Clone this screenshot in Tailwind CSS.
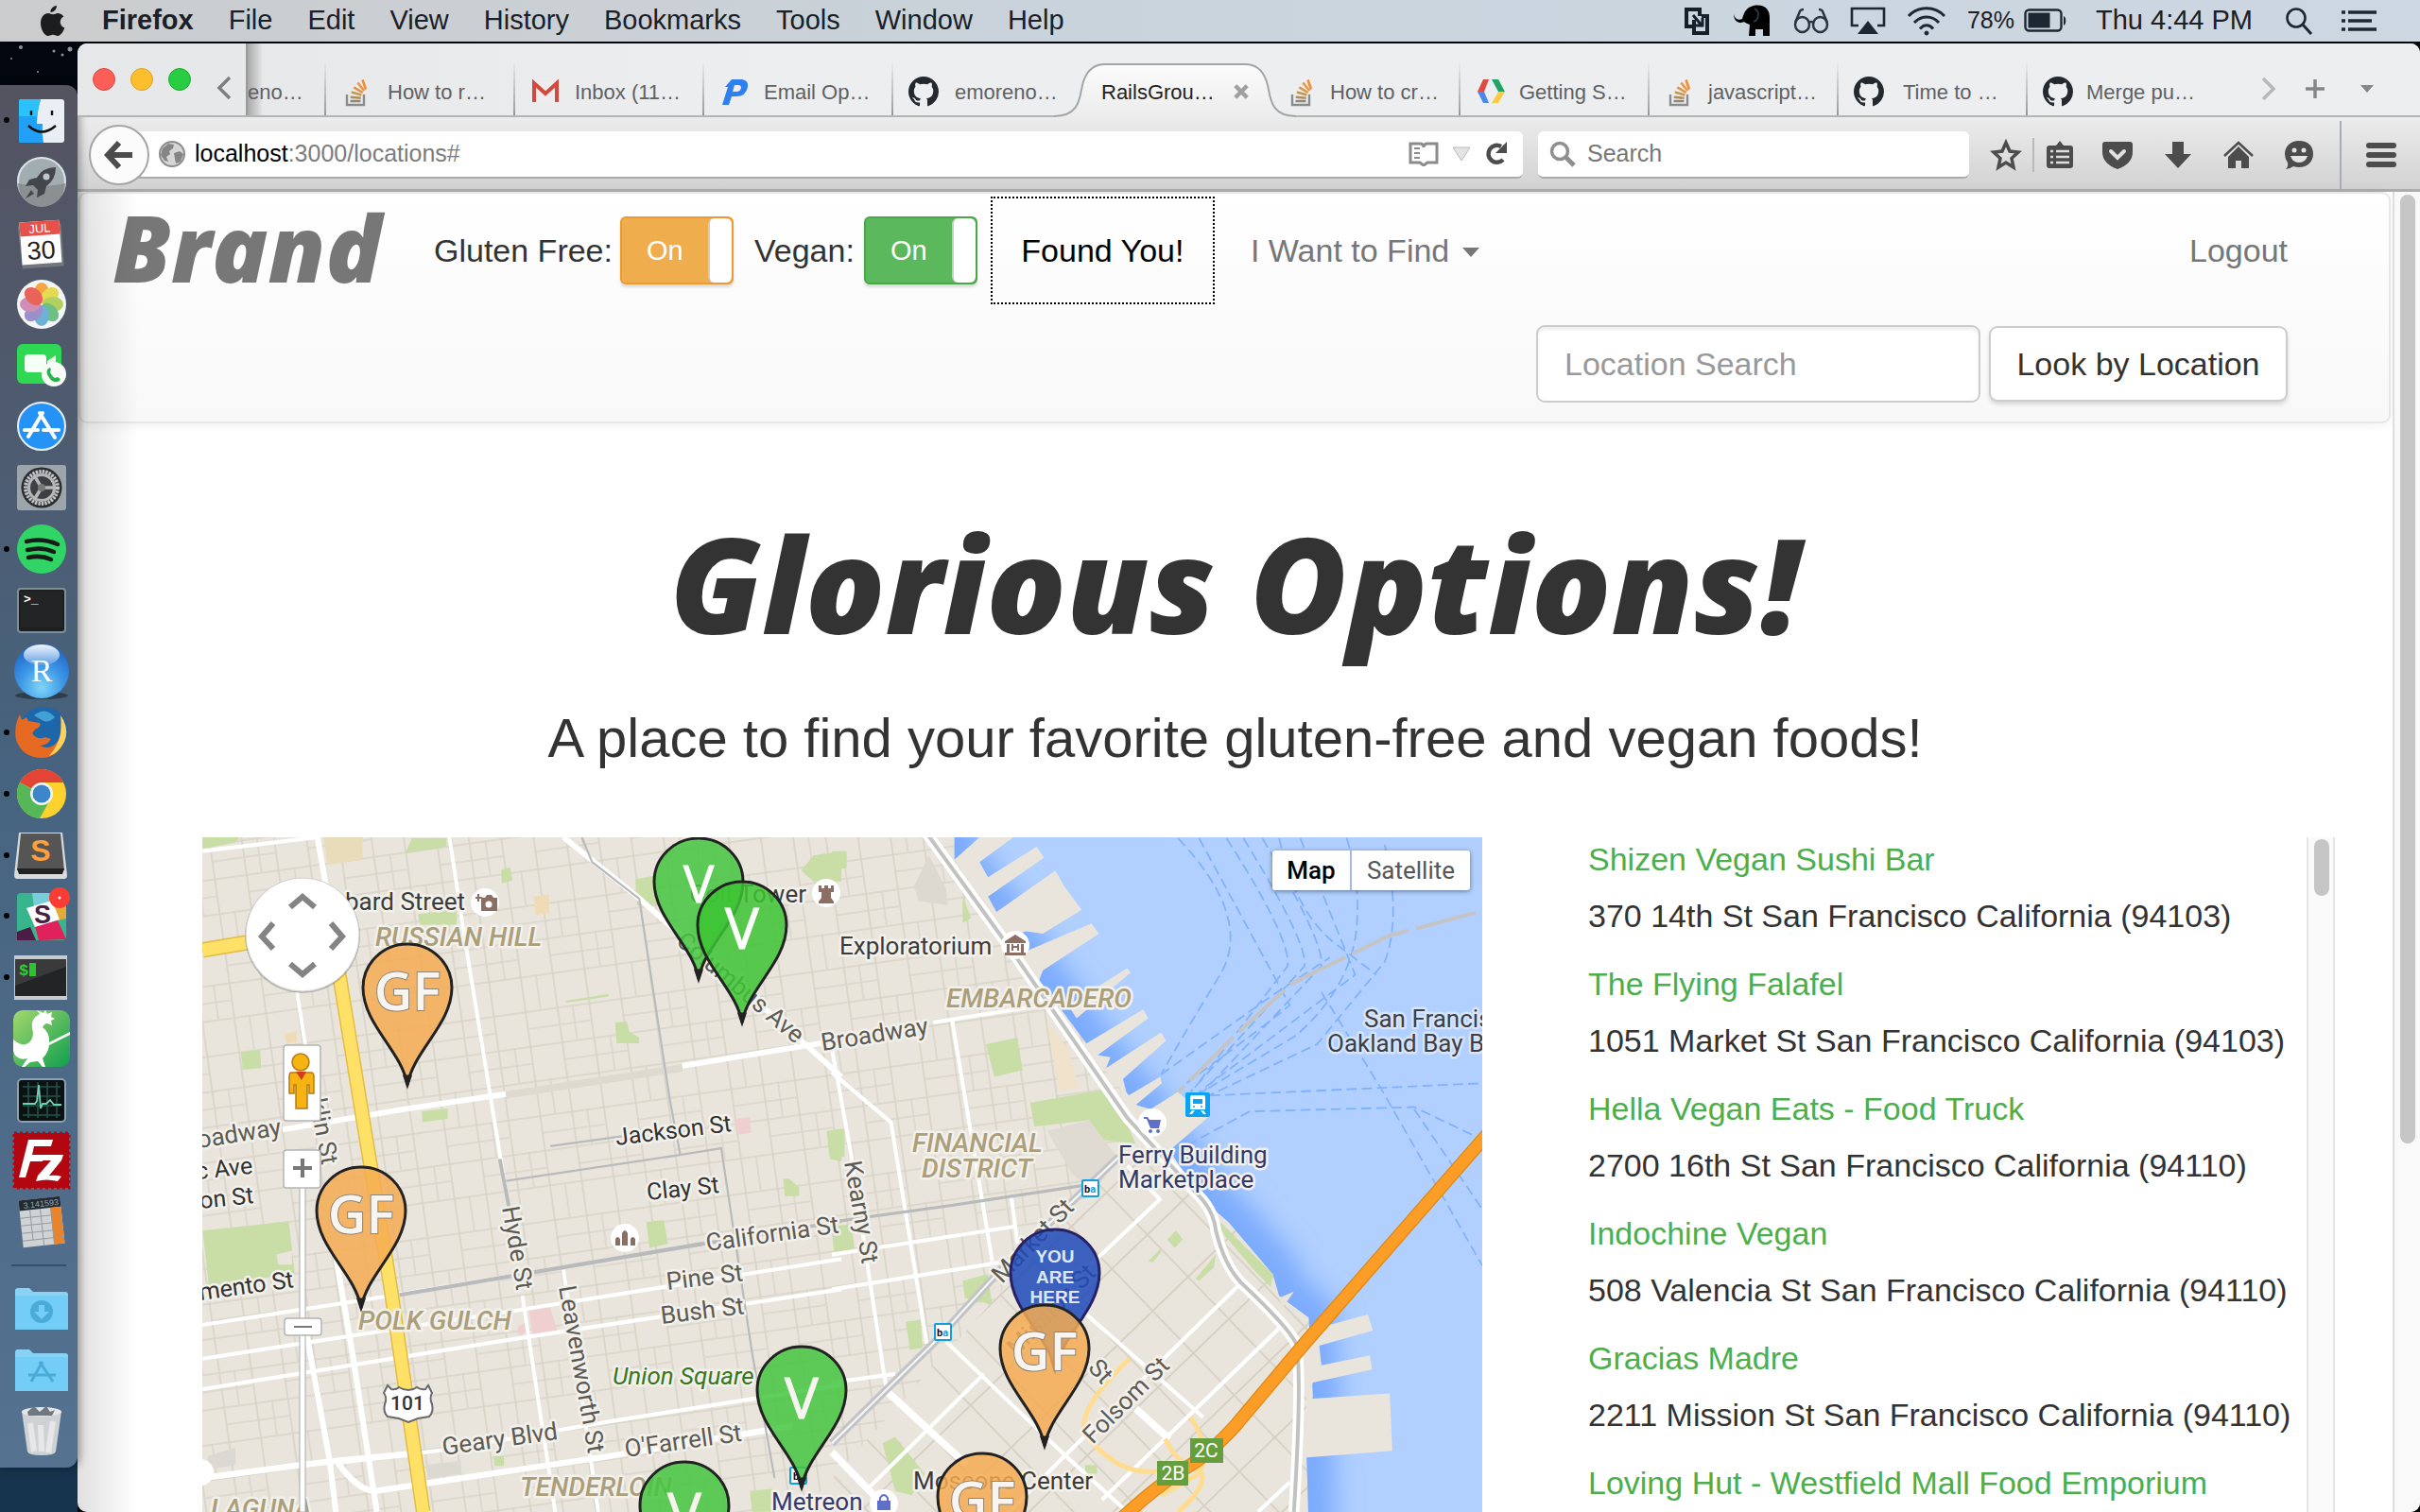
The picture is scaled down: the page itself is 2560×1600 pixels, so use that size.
<!DOCTYPE html>
<html lang="en">
<head>
<meta charset="utf-8">
<title>RailsGroupProject</title>
<script src="https://cdn.jsdelivr.net/npm/@tailwindcss/browser@4"></script>
</head>
<body class="h-screen overflow-hidden flex flex-col bg-[#02060f] font-['Liberation_Sans',Arial,sans-serif] text-[#333]">
<svg class="hidden" aria-hidden="true">
  <defs>
    <symbol id="so" viewBox="0 0 32 32"><path d="M6 19v11h18V19" fill="none" stroke="#8a8d90" stroke-width="2.4"/><path d="M9.500 26h11" stroke="#8f8672" stroke-width="2.600"/><path d="M9.700 21.800l11 1" stroke="#a89064" stroke-width="2.600"/><path d="M10.800 16.600l10.600 3" stroke="#c99650" stroke-width="2.600"/><path d="M13.300 11.300l9.400 5.700" stroke="#dd9747" stroke-width="2.600"/><path d="M17.300 6.500l7 8.500" stroke="#ee9541" stroke-width="2.600"/><path d="M22.500 3.500l3.500 10" stroke="#f58a32" stroke-width="2.600"/></symbol>
    <symbol id="gh" viewBox="0 0 16 16"><path fill="#24292e" d="M8 0C3.580 0 0 3.580 0 8c0 3.540 2.290 6.530 5.470 7.590.4.070.55-.17.55-.38 0-.19-.01-.82-.01-1.490-2.010.37-2.530-.49-2.690-.94-.09-.23-.48-.94-.82-1.130-.28-.15-.68-.52-.01-.53.63-.01 1.080.58 1.230.82.72 1.210 1.870.87 2.330.66.07-.52.28-.87.51-1.070-1.780-.2-3.640-.89-3.640-3.950 0-.87.31-1.590.82-2.150-.08-.2-.36-1.020.08-2.120 0 0 .67-.21 2.200.82a7.600 7.600 0 0 1 4 0c1.530-1.040 2.200-.82 2.200-.82.44 1.100.16 1.920.08 2.120.51.56.82 1.270.82 2.150 0 3.070-1.870 3.750-3.650 3.950.29.25.54.73.54 1.480 0 1.070-.01 1.930-.01 2.200 0 .21.15.46.55.38A8 8 0 0 0 16 8c0-4.420-3.580-8-8-8z"/></symbol>
    <symbol id="pin" viewBox="-50 -3 100 158" overflow="visible"><path d="M0 150C-6 114-47 86-47 47A47 46 0 0 1 47 47C47 86 6 114 0 150Z" stroke-width="3"/><path d="M0 150l-3-9h6z" fill="#222" stroke="#222" stroke-width="3"/></symbol>
  </defs>
</svg>

<!-- System menu bar -->
<header class="h-[44px] shrink-0 mb-[2px] flex items-center justify-between bg-linear-to-r from-[#cbcccd] via-[#c9d4dd] to-[#cdd7e1] pl-[39px] pr-[45px] text-[29px] text-[#1a2026] whitespace-nowrap">
  <nav class="flex items-center gap-[37px]" aria-label="Menu bar">
    <button aria-label="Apple"><svg class="w-[32px] h-[34px]" viewBox="0 0 32 34"><path fill="#1c1d1f" d="M21 1c0 4-3 7-6.500 7C14 4.500 17 1.500 21 1zM22 9c2.500 0 5 1.300 6.300 3.500-5.300 3-4.300 10 1 12C28 28.500 25 33 22 33c-2 0-3-1.200-5-1.200s-3.200 1.200-5 1.200C8 33 4 26 4 19.500 4 13 8 9 12 9c2.200 0 3.600 1.300 5.200 1.300C19 10.300 20 9 22 9z"/></svg></button>
    <button class="font-bold">Firefox</button>
    <button>File</button><button>Edit</button><button>View</button><button>History</button><button>Bookmarks</button><button>Tools</button><button>Window</button><button>Help</button>
  </nav>
  <div class="flex items-center gap-[22px]">
    <svg class="w-[32px] h-[32px]" viewBox="0 0 32 32" fill="none" stroke="#15202b" stroke-width="4"><path d="M11 22H5V4h14v7"/><path d="M13 15v14h14V11h-6"/><path d="M12 10l10 12M14 21h8v-8" stroke-width="3"/></svg>
    <svg class="w-[42px] h-[34px]" viewBox="0 0 42 34"><path fill="#000" d="M1 10c1 5 5 7 9 5 2-7 4-12 12-14 9-2 17 2 17 12v20h-7v-7h-8v7h-7l1-12c-3-1-5-2-6-3-6 3-11-1-11-8z"/><path d="M23 4c6 3 5 12-1 14" fill="none" stroke="#2a4153" stroke-width="1.500"/></svg>
    <svg class="w-[38px] h-[28px]" viewBox="0 0 38 28" fill="none" stroke="#2a3540" stroke-width="2.500"><ellipse cx="9.500" cy="18" rx="7.500" ry="8"/><ellipse cx="28.500" cy="18" rx="7.500" ry="8"/><path d="M16.500 16q2.500-2 5 0M2 16L7 4q1-2 4-2M36 16L31 4q-1-2-4-2"/></svg>
    <svg class="w-[38px] h-[30px]" viewBox="0 0 38 30"><path d="M9 20H2V2h34v18h-7" fill="none" stroke="#1c2731" stroke-width="2.600"/><path d="M19 15l11 14H8z" fill="#1c2731"/></svg>
    <svg class="w-[42px] h-[32px]" viewBox="0 0 42 32" fill="none" stroke="#1c2731" stroke-width="3"><path d="M2 11C12-0 30-0 40 11M8 18c7-8 19-8 26 0M14 24.500c4-5 10-5 14 0"/><circle cx="21" cy="29" r="2" fill="#1c2731" stroke-width="1"/></svg>
    <div class="flex items-center gap-[10px]"><span class="text-[25px]">78%</span>
    <svg class="w-[46px] h-[26px]" viewBox="0 0 46 26"><rect x="1.500" y="1.500" width="38" height="22" rx="4" fill="none" stroke="#1c2731" stroke-width="2.400"/><rect x="4.500" y="4.500" width="23" height="16" fill="#1c2731"/><path d="M42 8c3 1 3 9 0 10z" fill="#1c2731"/></svg></div>
    <span class="ml-[8px] mr-[12px]">Thu 4:44 PM</span>
    <svg class="w-[30px] h-[30px] mr-[8px]" viewBox="0 0 30 30" fill="none" stroke="#1c2731" stroke-width="2.600"><circle cx="12" cy="12" r="9.500"/><path d="M19 19l9 10" stroke-width="3"/></svg>
    <svg class="w-[38px] h-[24px]" viewBox="0 0 38 24" stroke="#1c2731" stroke-width="3.600"><path d="M0 3h4M7 3h30M0 12h4M7 12h25M0 21h4M7 21h30"/></svg>
  </div>
</header>

<div class="flex-1 min-h-0 flex">
  <!-- Dock -->
  <aside class="w-[82px] shrink-0 pt-[44px] pb-[47px] bg-linear-to-b from-[#02060f] from-10% to-[#17344e] relative z-10">
    <svg class="absolute inset-x-0 top-0 w-full h-[44px]" viewBox="0 0 82 44" fill="#8d939c"><circle cx="22" cy="4" r="2"/><circle cx="57" cy="8" r="1.500"/><circle cx="74" cy="6" r="2.500"/><circle cx="66" cy="12" r="1.500"/><circle cx="12" cy="16" r="1"/><circle cx="40" cy="30" r="1"/></svg>
    <nav class="h-full flex flex-col rounded-r-[12px] pt-[5px] pb-[6px] bg-linear-to-b from-[#545360] via-[#46637f] via-50% to-[#557391] shadow-[2px_0_10px_#0006]" aria-label="Dock">
      <button class="flex-1 flex items-center gap-[6px] pl-[4px]" aria-label="Finder"><i class="size-[6px] rounded-full bg-black"></i><svg class="size-[56px]" viewBox="0 0 56 56"><rect x="4" y="6" width="48" height="46" rx="3" fill="#e9eff5"/><path d="M6 6h21q-4 14-4 26h6q-1 10 1 20H6q-2 0-2-2V8q0-2 2-2z" fill="#21a0f5"/><path d="M6 6h21q-3 8-3.500 18H4V8q0-2 2-2z" fill="#2cc1fa"/><path d="M17 18v5M39 18v5M14 34q14 13 29 0" fill="none" stroke="#111" stroke-width="2.400"/></svg></button>
      <button class="flex-1 flex items-center pl-[16px]" aria-label="Launchpad"><svg class="size-[56px]" viewBox="0 0 56 56"><circle cx="28" cy="28" r="25" fill="#a2adb1" stroke="#dde5ea" stroke-width="2"/><path d="M3 30a25 25 0 0 0 50 0q-25 6-50 0z" fill="#8b9092"/><path d="M43 13q-14 0-20 11l-8 2-4 7 8-1 5 5-1 8 8-4 2-8q10-7 10-20z" fill="#43474c"/><circle cx="33" cy="23" r="3.500" fill="#bcc7cc"/><path d="M17 37l-6 9 9-5z" fill="#43474c"/></svg></button>
      <button class="flex-1 flex items-center pl-[16px]" aria-label="Calendar"><svg class="size-[56px]" viewBox="0 0 56 56"><g transform="rotate(-4 28 28)"><path d="M6 7l-2 3 2 44h44V9z" fill="#71777c"/><rect x="6" y="5" width="42" height="45" fill="#fff"/><rect x="6" y="5" width="42" height="15" fill="#e8504a"/><text x="27" y="17" font-size="13" fill="#fff" text-anchor="middle">JUL</text><text x="27" y="45" font-size="27" fill="#222" text-anchor="middle">30</text></g></svg></button>
      <button class="flex-1 flex items-center pl-[16px]" aria-label="Photos"><svg class="size-[56px]" viewBox="0 0 56 56"><circle cx="28" cy="28" r="26" fill="#f4f5f6"/><g opacity=".88"><ellipse cx="28" cy="16" rx="8" ry="11" fill="#f79a2c"/><ellipse cx="28" cy="16" rx="8" ry="11" fill="#e3d83a" transform="rotate(45 28 28)"/><ellipse cx="28" cy="16" rx="8" ry="11" fill="#aacb4b" transform="rotate(90 28 28)"/><ellipse cx="28" cy="16" rx="8" ry="11" fill="#5bb974" transform="rotate(135 28 28)"/><ellipse cx="28" cy="16" rx="8" ry="11" fill="#5ba9d2" transform="rotate(180 28 28)"/><ellipse cx="28" cy="16" rx="8" ry="11" fill="#8f83c4" transform="rotate(225 28 28)"/><ellipse cx="28" cy="16" rx="8" ry="11" fill="#cc7fae" transform="rotate(270 28 28)"/><ellipse cx="28" cy="16" rx="8" ry="11" fill="#e85046" transform="rotate(315 28 28)"/></g></svg></button>
      <button class="flex-1 flex items-center pl-[16px]" aria-label="FaceTime"><svg class="size-[56px]" viewBox="0 0 56 56"><rect x="2" y="6" width="47" height="42" rx="6" fill="#2fd852"/><rect x="10" y="17" width="23" height="19" rx="4" fill="#f4fff5"/><path d="M34 24l9-6v17l-9-6z" fill="#e5f7e8"/><circle cx="41" cy="38" r="13" fill="#f8faf8"/><path d="M35 32q2-2 3 1l-1 3q2 4 5 6l3-1q4 2 2 4-7 4-12-5-3-5 0-8z" fill="#24b54c"/></svg></button>
      <button class="flex-1 flex items-center pl-[16px]" aria-label="App Store"><svg class="size-[56px]" viewBox="0 0 56 56"><circle cx="28" cy="28" r="25" fill="#2493f5" stroke="#e8eef5" stroke-width="2"/><path d="M29 14L14 39M26 14l16 26M10 32h14M30 32h16" stroke="#fff" stroke-width="4" stroke-linecap="round"/></svg></button>
      <button class="flex-1 flex items-center pl-[16px]" aria-label="System Preferences"><svg class="size-[56px]" viewBox="0 0 56 56"><rect x="2" y="4" width="52" height="48" rx="3" fill="#9ba5ab"/><circle cx="28" cy="28" r="20" fill="#55595c" stroke="#2b2d2f" stroke-width="3"/><circle cx="28" cy="28" r="17" fill="none" stroke="#c8c9ca" stroke-width="4" stroke-dasharray="2 1.500"/><circle cx="28" cy="28" r="13.500" fill="#3d4043" stroke="#b5b7b9" stroke-width="3"/><path d="M28 28H43M28 28l-8-13M28 28l-8 13" stroke="#b5b7b9" stroke-width="3.500"/><circle cx="28" cy="28" r="4" fill="#777"/></svg></button>
      <button class="flex-1 flex items-center gap-[6px] pl-[4px]" aria-label="Spotify"><i class="size-[6px] rounded-full bg-black"></i><svg class="size-[56px]" viewBox="0 0 56 56"><circle cx="28" cy="28" r="26" fill="#30d566"/><path d="M12 20q17-4 33 3M13 29q15-4 28 2M14 37q13-3 24 2" fill="none" stroke="#151c18" stroke-width="4.500" stroke-linecap="round"/></svg></button>
      <button class="flex-1 flex items-center pl-[16px]" aria-label="Terminal"><svg class="size-[56px]" viewBox="0 0 56 56"><rect x="3" y="5" width="50" height="46" rx="3" fill="#1d1e20" stroke="#7d9095" stroke-width="2"/><rect x="6" y="8" width="44" height="38" fill="#232425"/><text x="9" y="20" font-size="13" font-weight="700" fill="#fff" font-family="Liberation Mono, monospace">&gt;_</text></svg></button>
      <button class="flex-1 flex items-center pl-[13px]" aria-label="RStudio"><svg class="size-[62px]" viewBox="0 0 62 62"><defs><radialGradient id="rg" cx=".5" cy=".8" r=".8"><stop stop-color="#7fd6f8"/><stop offset=".5" stop-color="#3b97e6"/><stop offset="1" stop-color="#1d62c4"/></radialGradient><linearGradient id="rs" x2="0" y2="1"><stop stop-color="#f2f7fd"/><stop offset="1" stop-color="#5d9be4"/></linearGradient></defs><ellipse cx="31" cy="57" rx="28" ry="4" fill="#2d3d4b"/><circle cx="31" cy="31" r="29" fill="url(#rg)"/><ellipse cx="31" cy="14" rx="19" ry="11" fill="url(#rs)"/><text x="31" y="42" font-size="34" fill="#fff" text-anchor="middle" font-family="Liberation Serif, serif">R</text></svg></button>
      <button class="flex-1 flex items-center gap-[4px] pl-[4px]" aria-label="Firefox"><i class="size-[6px] rounded-full bg-black"></i><svg class="size-[60px]" viewBox="0 0 60 60"><circle cx="32" cy="29" r="26" fill="#1e66aa"/><path d="M22 12q12-10 22 2-6 6-12 4z" fill="#41a0d4"/><path d="M50 12q10 14 4 28-8 17-24 17-20 0-27-19-3-14 4-27l2 6 5-3 2 4 12 2q2 4-5 7l-3 4q6 8 14 4l6 2q-4 7-12 7 12 6 20-6 6-12 2-26z" fill="#e66a21"/><path d="M50 12q10 14 4 28-6 12-16 15 10-12 12-24 1-10 0-19z" fill="#fcd05a"/></svg></button>
      <button class="flex-1 flex items-center gap-[6px] pl-[4px]" aria-label="Chrome"><i class="size-[6px] rounded-full bg-black"></i><svg class="size-[56px]" viewBox="0 0 56 56"><circle cx="28" cy="28" r="26" fill="#fdd22f"/><path d="M28 28L5 16A26 26 0 0 1 51 16H28z" fill="#e34436"/><path d="M5 16A26 26 0 0 0 26 54l10-18-8-8z" fill="#55b757"/><circle cx="28" cy="28" r="12" fill="#f4f6f6"/><circle cx="28" cy="28" r="9.500" fill="#3b87c9"/></svg></button>
      <button class="flex-1 flex items-center gap-[4px] pl-[4px]" aria-label="Sublime Text"><i class="size-[6px] rounded-full bg-black"></i><svg class="size-[58px]" viewBox="0 0 58 58"><path d="M6 5h46l5 45q0 4-3 4H4q-3 0-3-4z" fill="#d9dadb"/><path d="M8 6h42l4 39H4z" fill="#555"/><path d="M4 43h50l-2 6H6z" fill="#222"/><text x="29" y="35" font-size="32" font-weight="700" fill="#fda03c" text-anchor="middle">S</text></svg></button>
      <button class="flex-1 flex items-center gap-[6px] pl-[4px]" aria-label="Slack"><i class="size-[6px] rounded-full bg-black"></i><svg class="size-[62px]" viewBox="0 0 62 62"><rect x="2" y="7" width="52" height="50" rx="4" fill="#38b58d"/><path d="M18 7h18l4 10-20 6z" fill="#77cddb"/><path d="M38 10h16v24l-10 2z" fill="#e2ab35"/><path d="M21 42l24-6 9 20-29 1z" fill="#e0215c"/><path d="M2 48l14-5 6 14H2z" fill="#4b1c45"/><path d="M12 23l27-8 8 20-26 8z" fill="#fff"/><text x="29" y="39" font-size="27" font-weight="700" fill="#462047" text-anchor="middle">S</text><circle cx="47" cy="12" r="11" fill="#fb3c35"/><circle cx="47" cy="12" r="1.500" fill="#fff"/></svg></button>
      <button class="flex-1 flex items-center gap-[4px] pl-[4px]" aria-label="iTerm"><i class="size-[6px] rounded-full bg-black"></i><svg class="size-[58px]" viewBox="0 0 58 58"><rect x="1" y="6" width="56" height="47" fill="#c8cbcd"/><rect x="2" y="10" width="54" height="39" fill="#232425"/><path d="M2 38L56 18V10H2z" fill="#383a3b"/><text x="6" y="27" font-size="17" font-weight="700" fill="#28d12d" font-family="Liberation Mono, monospace">$</text><rect x="17" y="14" width="7" height="14" fill="#29c62c"/></svg></button>
      <button class="flex-1 flex items-center pl-[13px]" aria-label="Dragon"><svg class="size-[62px]" viewBox="0 0 62 62"><defs><linearGradient id="dg" x2="1" y2="1"><stop stop-color="#a4d86c"/><stop offset="1" stop-color="#0f9f4f"/></linearGradient></defs><rect x="1" y="1" width="60" height="60" rx="10" fill="url(#dg)"/><path d="M1 32q10 9 17 3 6-6 3-15-2-10 8-15l-3-4 7 3 2-3 2 4 5-2-1 5 4 2-4 2 1 5-5-2q-3 0-5 4 8 6 7 16l22-11v3L39 38q-1 8-7 14l3 9h-3l-5-6-8 1-6 5h-3l6-9q-12 3-15-8z" fill="#fff"/></svg></button>
      <button class="flex-1 flex items-center pl-[16px]" aria-label="Activity Monitor"><svg class="size-[56px]" viewBox="0 0 56 56"><rect x="3" y="6" width="50" height="45" rx="4" fill="#0c1114" stroke="#8ea1ab" stroke-width="2"/><path d="M8 14h40M8 24h40M8 34h40M8 44h40M14 9v38M24 9v38M34 9v38M44 9v38" stroke="#205547" stroke-width="1.500"/><path d="M8 32h13l2-3 2-17 2 25 2-5h4l4-4 4 5h8" fill="none" stroke="#70d2b2" stroke-width="1.800"/></svg></button>
      <button class="flex-1 flex items-center pl-[13px]" aria-label="FileZilla"><svg class="size-[62px]" viewBox="0 0 62 62"><rect x="2" y="2" width="58" height="58" fill="#b20610" stroke="#b20610" stroke-width="3" stroke-dasharray="3 3"/><path d="M17 9h26l-2 7H23l-2 9h13l-2 7H19l-5 17H7zM33 25h21l-2 6-13 16q8-1 13 1l-4 5q-12-3-23 0l2-6 14-16h-9z" fill="#fff"/></svg></button>
      <button class="flex-1 flex items-center pl-[16px]" aria-label="Calculator"><svg class="size-[56px]" viewBox="0 0 56 56"><g transform="rotate(-6 28 28)"><rect x="6" y="3" width="44" height="50" fill="#d0d3d6"/><rect x="6" y="3" width="44" height="11" fill="#222b33"/><text x="48" y="12" font-size="9" fill="#9ba6ad" text-anchor="end">3.141593</text><rect x="39" y="14" width="11" height="39" fill="#ee8226"/><path d="M6 22h44M6 30h44M6 38h44M6 46h44M17 14v32M28 14v39M39 14v39" stroke="#999" stroke-width="1"/></g></svg></button>
      <hr class="mt-[12px] mb-[13px] ml-[12px] mr-[12px] border-t-2 border-[#35506c]">
      <button class="flex-1 flex items-center pl-[15px]" aria-label="Downloads"><svg class="size-[58px]" viewBox="0 0 58 58"><path d="M1 10q0-3 3-3h12l4 4h34q3 0 3 3v36H1z" fill="#87d2f5"/><path d="M1 15h56v36H1z" fill="#73cdf6"/><circle cx="29" cy="32" r="12" fill="#4aabd8"/><path d="M26 25h6v7h5l-8 8-8-8h5z" fill="#73cdf6"/></svg></button>
      <button class="flex-1 flex items-center pl-[15px]" aria-label="Applications"><svg class="size-[58px]" viewBox="0 0 58 58"><path d="M1 10q0-3 3-3h12l4 4h34q3 0 3 3v36H1z" fill="#87d2f5"/><path d="M1 15h56v36H1z" fill="#73cdf6"/><path d="M30 20L18 41M27 20l14 21M15 34h29" stroke="#4aabd8" stroke-width="3"/></svg></button>
      <button class="flex-1 flex items-center pl-[16px]" aria-label="Trash"><svg class="size-[56px]" viewBox="0 0 56 56"><path d="M7 7h42l-6 43q-1 4-15 4t-15-4z" fill="#cfd2d4"/><ellipse cx="28" cy="8" rx="21" ry="5" fill="#e4e5e6"/><path d="M13 8l7-6 6 6 7-6 4 6 5-2-3 6H14z" fill="#6f7880"/><path d="M16 20l4 30M40 18l-5 33M27 22l1 28" stroke="#e6e7e8" stroke-width="6"/></svg></button>
    </nav>
  </aside>

  <!-- Browser window -->
  <main class="flex-1 min-w-0 flex flex-col rounded-[10px] overflow-hidden bg-white">
    <!-- Tab strip -->
    <div class="h-[78px] shrink-0 flex bg-linear-to-r from-[#e6e7e8] to-[#edeef0] to-30% border-b-2 border-[#b3b4b5] text-[22px] text-[#606163] whitespace-nowrap relative z-10">
      <div class="w-[180px] shrink-0 flex items-center gap-[16px] pl-[16px] border-r-2 border-[#999]">
        <button aria-label="Close" class="size-[24px] rounded-full bg-[#fb5f57] border border-[#dd443d]"></button>
        <button aria-label="Minimize" class="size-[24px] rounded-full bg-[#fdbe2e] border border-[#dda123]"></button>
        <button aria-label="Zoom" class="size-[24px] rounded-full bg-[#28cd41] border border-[#1eaa30]"></button>
        <button aria-label="Scroll tabs left" class="ml-[10px] pt-[18px]"><svg class="w-[18px] h-[26px]" viewBox="0 0 18 26"><path d="M15 2L4 13l11 11" fill="none" stroke="#7c7e80" stroke-width="3.500"/></svg></button>
      </div>
      <div class="flex-1 min-w-0 flex" role="tablist">
        <button role="tab" class="w-[81px] shrink-0 flex items-center pt-[26px] bg-linear-to-r from-[#a8a8a8] to-transparent to-20%">eno…</button>
        <button role="tab" class="w-[200px] shrink-0 flex items-center gap-[17px] pl-[16px] pt-[26px] border-l-2 [border-image:linear-gradient(transparent_25%,#999)_1]"><svg class="size-[32px]"><use href="#so"/></svg>How to r…</button>
        <button role="tab" class="w-[200px] shrink-0 flex items-center gap-[15px] pl-[16px] pt-[26px] border-l-2 [border-image:linear-gradient(transparent_25%,#999)_1]"><svg class="size-[32px]" viewBox="0 0 32 32"><path d="M4 5h24v22H4z" fill="#eee"/><path d="M4 27V7l12 11L28 7v20" fill="none" stroke="#d4493e" stroke-width="4"/></svg>Inbox (11…</button>
        <button role="tab" class="w-[200px] shrink-0 flex items-center gap-[15px] pl-[16px] pt-[26px] border-l-2 [border-image:linear-gradient(transparent_25%,#999)_1]"><svg class="size-[32px]" viewBox="0 0 32 32"><path fill-rule="evenodd" d="M13 3h11q7 1 6 8-2 10-12 10h-5L10 30H3l6-19H6zM16 9l-2 7h4q4 0 5-4 0-3-3-3z" fill="#2d80ee"/></svg>Email Op…</button>
        <button role="tab" class="w-[200px] shrink-0 flex items-center gap-[17px] pl-[16px] pt-[26px] border-l-2 [border-image:linear-gradient(transparent_25%,#999)_1]"><svg class="size-[32px]"><use href="#gh"/></svg>emoreno…</button>
        <div class="w-[200px] shrink-0 relative">
          <svg class="absolute -left-[28px] top-[20px] w-[256px] h-[58px]" viewBox="0 0 256 58"><defs><linearGradient id="tg" x2="0" y2="1"><stop stop-color="#fcfcfc"/><stop offset="1" stop-color="#ececec"/></linearGradient></defs><path d="M0 58V57C32 57 26 30 32 18Q38 2 54 2H202Q218 2 224 18C230 30 224 57 256 57V58z" fill="url(#tg)"/><path d="M0 57C32 57 26 30 32 18Q38 2 54 2H202Q218 2 224 18C230 30 224 57 256 57" fill="none" stroke="#a4a5a6" stroke-width="2"/></svg>
          <button role="tab" aria-selected="true" class="relative w-full h-full flex items-center gap-[20px] pl-[22px] pt-[26px] text-[#222]">RailsGrou…<svg class="size-[16px]" viewBox="0 0 18 18"><path d="M2 2l14 14M16 2L2 16" stroke="#a0a0a0" stroke-width="5"/></svg></button>
        </div>
        <button role="tab" class="w-[200px] shrink-0 flex items-center gap-[14px] pl-[18px] pt-[26px]"><svg class="size-[32px]"><use href="#so"/></svg>How to cr…</button>
        <button role="tab" class="w-[200px] shrink-0 flex items-center gap-[14px] pl-[16px] pt-[26px] border-l-2 [border-image:linear-gradient(transparent_25%,#999)_1]"><svg class="size-[32px]" viewBox="0 0 32 32"><path d="M8 3h6l-5 13H2z" fill="#dc4c40"/><path d="M2 16h7l5 12H8z" fill="#4b87ef"/><path d="M17 3h7l7 13h-7z" fill="#21a464"/><path d="M24 16h7l-7 12h-7z" fill="#fbcb48"/></svg>Getting S…</button>
        <button role="tab" class="w-[200px] shrink-0 flex items-center gap-[14px] pl-[16px] pt-[26px] border-l-2 [border-image:linear-gradient(transparent_25%,#999)_1]"><svg class="size-[32px]"><use href="#so"/></svg>javascript…</button>
        <button role="tab" class="w-[200px] shrink-0 flex items-center gap-[20px] pl-[16px] pt-[26px] border-l-2 [border-image:linear-gradient(transparent_25%,#999)_1]"><svg class="size-[32px]"><use href="#gh"/></svg>Time to …</button>
        <button role="tab" class="w-[200px] shrink-0 flex items-center gap-[14px] pl-[16px] pt-[26px] border-l-2 [border-image:linear-gradient(transparent_25%,#999)_1]"><svg class="size-[32px]"><use href="#gh"/></svg>Merge pu…</button>
      </div>
      <div class="w-[170px] shrink-0 flex items-center justify-between pt-[20px] pr-[48px]">
        <button aria-label="Scroll tabs right"><svg class="w-[18px] h-[26px]" viewBox="0 0 18 26"><path d="M4 2l11 11L4 24" fill="none" stroke="#b7b8ba" stroke-width="3.500"/></svg></button>
        <button aria-label="New tab" class="pr-[6px]"><svg class="size-[22px]" viewBox="0 0 22 22"><path d="M11 1v20M1 11h20" stroke="#858688" stroke-width="3.500"/></svg></button>
        <button aria-label="List all tabs"><svg class="w-[16px] h-[10px]" viewBox="0 0 16 10"><path d="M1 1h14L8 9z" fill="#858688"/></svg></button>
      </div>
    </div>

    <!-- Navigation toolbar -->
    <div class="h-[79px] shrink-0 flex items-center bg-linear-to-b from-[#ececec] to-[#d2d2d2] border-b-3 border-[#acacac] pt-[3px] pl-[12px] pr-[25px] text-[#4c4c4c]">
      <button aria-label="Back" class="relative z-10 size-[64px] shrink-0 rounded-full border-2 border-[#a5a5a5] bg-[#fbfbfb] flex items-center justify-center"><svg class="size-[32px]" viewBox="0 0 32 32"><path d="M16 3L4 16l12 13M5 16h25" fill="none" stroke="#4c4c4c" stroke-width="6"/></svg></button>
      <div class="-ml-[14px] h-[50px] flex-1 min-w-0 flex items-center rounded-r-[6px] bg-white border-b-2 border-[#a9a9a9] pl-[24px] pr-[16px]">
        <svg class="size-[28px] shrink-0" viewBox="0 0 28 28"><circle cx="14" cy="14" r="13" fill="#d6d6d6" stroke="#8d8d8d" stroke-width="2"/><path d="M4 8l6-5 6 1-1 4-4 3 1 3-4 3 2 5-4-1-4-6zM16 13l6-2 4 3-3 8-5 2-1-5z" fill="#858585"/></svg>
        <div class="flex-1 min-w-0 pl-[10px] text-[25px]" role="textbox" aria-label="Address" tabindex="0"><span class="text-black">localhost</span><span class="text-[#7c7c7c]">:3000/locations#</span></div>
        <div class="flex items-center gap-[14px]">
          <svg class="w-[32px] h-[26px]" viewBox="0 0 32 26" fill="none" stroke="#8b8b8b" stroke-width="3"><path d="M2 2h10q4 0 4 4 0-4 4-4h10v20H20l-4 3-4-3H2z"/><path d="M6 7h6M6 12h6M6 17h6" stroke-width="2"/></svg>
          <svg class="w-[20px] h-[16px]" viewBox="0 0 20 16"><path d="M1 1h18l-9 14z" fill="#e4e4e4" stroke="#b9b9b9"/></svg>
          <button aria-label="Reload"><svg class="size-[25px] block" viewBox="0 0 25 25"><path d="M20 19A9 9 0 1 1 18 5" fill="none" stroke="#4c4c4c" stroke-width="4.500"/><path d="M24 0v12H12z" fill="#4c4c4c"/></svg></button>
        </div>
      </div>
      <label class="ml-[16px] h-[50px] w-[456px] shrink-0 flex items-center gap-[12px] rounded-[6px] bg-white border-b-2 border-[#a9a9a9] pl-[12px]">
        <svg class="size-[28px] shrink-0" viewBox="0 0 28 28" fill="none" stroke="#8f8f8f"><circle cx="11" cy="11" r="8.500" stroke-width="3.500"/><path d="M17 17l9 9" stroke-width="5"/></svg>
        <input type="text" aria-label="Search" placeholder="Search" class="w-full bg-transparent outline-none text-[25px] placeholder:text-[#777]">
      </label>
      <div class="flex items-center ml-[22px]">
        <button aria-label="Bookmark"><svg class="size-[34px]" viewBox="0 0 34 34"><path d="M17 4l4 9 9 1-7 6.500 2 9.500-8-5-8 5 2-9.500L4 14l9-1z" fill="none" stroke="#4c4c4c" stroke-width="3.500"/></svg></button>
        <i class="w-[2px] h-[36px] bg-[#b9b9b9] mx-[11px]"></i>
        <button aria-label="Bookmarks list"><svg class="size-[32px]" viewBox="0 0 32 32"><path d="M12 6l4-5 4 5h7q3 0 3 3v18q0 3-3 3H5q-3 0-3-3V9q0-3 3-3z" fill="#4c4c4c"/><path d="M6 12h3M12 12h14M6 18h3M12 18h14M6 24h3M12 24h14" stroke="#ddd" stroke-width="2.500"/></svg></button>
        <button aria-label="Pocket" class="ml-[29px]"><svg class="size-[32px]" viewBox="0 0 32 32"><path d="M3 2h26q3 0 3 3v8q0 12-16 18Q0 25 0 13V5q0-3 3-3z" fill="#4c4c4c"/><path d="M9 12l7 7 7-7" fill="none" stroke="#e0e0e0" stroke-width="4" stroke-linecap="round"/></svg></button>
        <button aria-label="Downloads" class="ml-[32px]"><svg class="size-[32px]" viewBox="0 0 32 32"><path d="M10 2h12v13h8L16 30 2 15h8z" fill="#4c4c4c"/></svg></button>
        <button aria-label="Home" class="ml-[31px]"><svg class="size-[34px]" viewBox="0 0 34 34"><path d="M2 18L17 4l15 14" fill="none" stroke="#4c4c4c" stroke-width="2.500"/><path d="M17 8l11 11v12h-8v-8h-6v8H6V19z" fill="#4c4c4c"/></svg></button>
        <button aria-label="Chat" class="ml-[30px]"><svg class="size-[34px]" viewBox="0 0 34 34"><path d="M17 2c10 0 15 6 15 14s-6 14-15 14q-3 0-6-1-4 3-8 3 3-3 2-7-3-4-3-9C2 8 8 2 17 2z" fill="#4c4c4c"/><path d="M8 18h18q-2 7-9 7t-9-7z" fill="#e4e4e4"/><circle cx="12" cy="12" r="2.500" fill="#e4e4e4"/><circle cx="22" cy="12" r="2.500" fill="#e4e4e4"/></svg></button>
        <i class="w-[2px] h-[72px] bg-[#a8adb5] ml-[26px] mr-[26px]"></i>
        <button aria-label="Menu"><svg class="w-[32px] h-[28px]" viewBox="0 0 32 28"><path d="M3 4h26M3 14h26M3 24h26" stroke="#4c4c4c" stroke-width="6" stroke-linecap="round"/></svg></button>
      </div>
    </div>

    <!-- Page -->
    <div class="flex-1 min-h-0 flex relative">
      <div class="flex-1 min-w-0 flex flex-col">
        <nav class="shrink-0 mx-[1px] mr-[2px] h-[245px] rounded-[9px] border-2 border-[#e7e7e7] bg-linear-to-b from-white to-[#f8f8f8] shadow-[0_2px_12px_#0000000f] pt-[3px] pl-[34px] pr-[107px] text-[34px] text-[#777] whitespace-nowrap">
          <div class="h-[114px] flex items-center">
            <a href="#" class="w-[340px] shrink-0 font-['Open_Sans',sans-serif] font-extrabold italic text-[98px] leading-[114px] pb-[8px]">Brand</a>
            <div class="flex items-center gap-[8px] text-[#333]">
              <label for="gf">Gluten Free:</label>
              <label for="gf" class="relative w-[120px] h-[72px] rounded-[6px] border-2 border-[#eb9a34] bg-[#f0ad4e] shadow-[0_3px_3px_#0002] text-white text-[29px] leading-[68px] pl-[26px]"><input id="gf" type="checkbox" checked class="sr-only">On<span class="absolute right-0 inset-y-0 w-[25px] rounded-[6px] bg-white border-l-2 border-[#ccc]"></span></label>
            </div>
            <div class="flex items-center gap-[10px] text-[#333] ml-[22px]">
              <label for="vg">Vegan:</label>
              <label for="vg" class="relative w-[120px] h-[72px] rounded-[6px] border-2 border-[#48a848] bg-[#5cb85c] shadow-[0_3px_3px_#0002] text-white text-[29px] leading-[68px] pl-[26px]"><input id="vg" type="checkbox" checked class="sr-only">On<span class="absolute right-0 inset-y-0 w-[25px] rounded-[6px] bg-white border-l-2 border-[#ccc]"></span></label>
            </div>
            <a href="#" class="ml-[14px] w-[237px] h-[114px] flex items-center justify-center border-2 border-dotted border-black text-black">Found You!</a>
            <button class="ml-[38px] flex items-center gap-[14px]">I Want to Find<svg class="w-[18px] h-[10px] mt-[4px]" viewBox="0 0 18 10"><path d="M0 0h18l-9 10z" fill="#777"/></svg></button>
            <a href="#" class="ml-auto">Logout</a>
          </div>
          <form class="mt-[22px] flex justify-end items-center gap-[9px]">
            <input type="text" aria-label="Location Search" placeholder="Location Search" class="w-[470px] h-[82px] rounded-[9px] border-2 border-[#ccc] bg-white shadow-[inset_0_3px_3px_#0001] px-[28px] placeholder:text-[#999]">
            <button type="button" class="w-[316px] h-[80px] rounded-[9px] border-2 border-[#ccc] bg-white shadow-[0_3px_4px_#0002] text-[#333]">Look by Location</button>
          </form>
        </nav>

        <header class="shrink-0 text-center whitespace-nowrap">
          <h1 class="mt-[94px] font-['Open_Sans',sans-serif] font-extrabold italic text-[140px] leading-[150px]">Glorious Options!</h1>
          <p class="mt-[56px] text-[58px] leading-[66px]">A place to find your favorite gluten-free and vegan foods!</p>
        </header>

        <div class="mt-[72px] flex-1 min-h-0 flex gap-[112px] pl-[132px] pr-[61px]">
          <!-- Map -->
          <section class="flex-1 min-w-0 relative overflow-hidden bg-[#e9e5dc]" aria-label="Map">
            <svg class="block w-full h-full font-[Roboto,sans-serif]" viewBox="0 0 1354 714" preserveAspectRatio="xMinYMin slice">
              <defs>
                <pattern id="gridN" width="34" height="37" patternUnits="userSpaceOnUse" patternTransform="rotate(-8) translate(6 8)"><path d="M0 1H34M1 0V37" stroke="#d8d3c6" stroke-width="1.600" fill="none"/></pattern>
                <pattern id="gridF" width="102" height="111" patternUnits="userSpaceOnUse" patternTransform="rotate(-8) translate(6 8)"><path d="M0 19H68M34 56H102M17 74V111M51 0V37M86 37V74" stroke="#dad5ca" stroke-width="1.500" fill="none"/></pattern>
                <pattern id="gridS" width="52" height="62" patternUnits="userSpaceOnUse" patternTransform="rotate(-44) translate(10 4)"><path d="M0 1H52M1 0V62" stroke="#d6d1c4" stroke-width="1.800" fill="none"/></pattern>
                <filter id="soft" x="-30%" y="-30%" width="160%" height="160%"><feGaussianBlur stdDeviation="30"/></filter>
                <clipPath id="sea"><path d="M290 0H1560V1600H1130L1125 1440 1140 1300 1130 1120 1060 1070 1045 1020 940 900 880 850 740 650 620 510 490 340 400 200 290 65z"/></clipPath>
                <clipPath id="landN"><path d="M0 0H796L970 240 975 338 634 714H0z"/></clipPath>
              </defs>
              <rect width="1354" height="714" fill="#e9e5dc"/>
              <g clip-path="url(#landN)"><rect width="1354" height="714" fill="url(#gridN)"/><rect width="1354" height="714" fill="url(#gridF)"/></g>
              <path d="M975 338L634 714H1180V500L1050 365z" fill="url(#gridS)"/>

              <!-- Parks and blocks, west side -->
              <g transform="matrix(.4337 0 0 .4591 -4 -6)">
                <path d="M10 920L220 898 235 1020 25 1045zM505 50L520 15H605V35zM535 190L630 180V215H540zM103 508L150 503 153 545 108 548zM545 645L608 638V662L546 670zM1016 440L1045 438 1050 460 1075 475V488H1020zM1065 110L1120 100V170H1070zM1470 90L1500 55 1568 45V115H1500zM1092 900L1135 895 1145 950 1100 960zM1426 800L1440 800 1465 820V840L1430 840zM1532 690L1568 685V760L1540 755zM720 1440H745V1462H722zM738 88L760 82 766 112 740 120zM895 390L1000 374V380L898 394zM1345 1520L1400 1515 1410 1568H1350zM10 13H100L90 25 10 40z" fill="#c8dea6"/>
                <path d="M190 975L228 966V998H195z" fill="#e9e5dc"/>
                <path d="M305 13H400V65L315 77z" fill="#e8dcbb"/><path d="M818 150L855 145V188L822 192zM210 465L240 460V485L215 490z" fill="#efdcb6"/>
                <path d="M805 1100L855 1090 875 1150 815 1158zM1308 662L1345 658 1348 695 1315 698zM780 1140L800 1130V1155L778 1160z" fill="#efcfcf"/>
                <path d="M555 1460L640 1450V1480L560 1492zM20 1440L90 1420V1460L30 1470z" fill="#dcd9d3"/>
                <g fill="none" stroke="#fff">
                  <g stroke-width="9"><path d="M612 13L650 250 750 830M790 1070L870 1568M240 370L262 500M890 1010L975 1568M10 1137L500 1065 790 1020"/><path d="M10 1215L800 1100 1568 985M10 1285L800 1165 1568 1055M340 1455L600 1425 1000 1360 1568 1275M10 45L290 13"/></g>
                  <g stroke-width="14"><path d="M290 13L310 120M10 1490L250 1460 340 1450 540 1432M340 1455Q390 1520 430 1520L1000 1440 1450 1370M335 980L375 1200 435 1568M262 1150L320 1450 335 1568"/><path d="M205 687L500 640 750 605M1180 540L1568 480M890 13L1070 150 1250 300 1480 490 1568 565" stroke-width="13"/></g>
                </g>
                <path d="M750 607L1180 545" stroke="#dedad0" stroke-width="17"/>
                <g fill="none" stroke="#b9babb" stroke-width="5"><path d="M935 13L960 70 1075 155 1150 620 1175 745 1275 730 1350 1200 1405 1490M490 1068L1230 950M750 805L1175 745M858 725L1050 700M735 755L757 865" /><path d="M490 1068L1230 950M735 755L757 865" stroke-width="9"/><path d="M1200 955L1568 898" stroke-width="8"/></g>
                <path d="M10 273L130 254M325 250L345 340 470 1060 548 1568" fill="none" stroke="#e3bc47" stroke-width="36"/>
                <path d="M10 273L130 254M325 250L345 340 470 1060 548 1568" fill="none" stroke="#ffe168" stroke-width="29"/>
              </g>

              <!-- Bay and eastern streets -->
              <g transform="matrix(.4464 0 0 .4591 666 -6)">
                <path d="M365 490L440 475 452 550 385 565zM470 625L640 595 690 650 720 720 640 710 610 665 480 680zM0 690L30 685V750H5zM175 1130L210 1125 215 1190 185 1195zM0 910L45 905 55 965 5 970zM310 1035L370 1020 380 1090 315 1075zM795 940L815 920 832 940 812 960zM750 990L780 960V970L760 993zM862 1030L910 975 905 1005 870 1035zM120 1410L150 1395 220 1480 190 1530 150 1520zM600 1460H628V1480H600zM0 45H35V85H0zM310 150L330 200 310 210z" fill="#c8dea6"/>
                <path d="M195 125L230 55 270 130 275 170 205 160z" fill="#ddd8d0"/><path d="M510 440L560 500 585 590 540 600z" fill="#f0e2cb"/><path d="M510 690L610 665 675 750 610 820 570 790z" fill="#dfdad2"/>
                <g clip-path="url(#sea)">
                  <rect x="200" width="1400" height="1600" fill="#b1d0ff"/>
                  <path d="M270 -60L290 65 400 200 490 340 620 510 740 650 880 850 940 900 1045 1020 1060 1070 1130 1120 1140 1300 1125 1440 1130 1660" fill="none" stroke="#7cabfd" stroke-width="130" filter="url(#soft)"/>
                </g>
                <g fill="none" stroke="#82b1fb" stroke-width="4" stroke-dasharray="24 12">
                  <path d="M820 15Q1000 200 920 330 850 440 780 560M870 15L1085 400Q1050 430 840 580M935 15Q1090 250 1080 310L860 590M975 15Q1130 260 1120 310L850 600M1020 15Q1170 260 1160 310L880 600M1060 15Q1100 200 1210 270L1290 330M1110 15L1240 330 870 600M1220 15Q1250 110 1245 200 1240 350 1100 470L860 610M1310 30Q1350 200 1310 300L1150 490 890 610M860 610L1541 580M810 740L990 645 1380 635 1541 710M1160 370L1300 590 1541 1000M1380 640L1541 870M780 560L1040 380 1180 290"/>
                </g>
                <path d="M1525 187L1320 240 1090 350 960 465 780 640" fill="none" stroke="#c4c4c4" stroke-width="9" stroke-dasharray="145 18"/>
                <g fill="#e9e5dc">
                  <path d="M290 65L350 13H430L350 70 370 105 485 35 503 60 370 150 390 185 530 90 550 125 592 180 500 235 460 230 415 245 450 280 615 212 633 235 500 320 490 345zM560 400L700 315 708 325 580 430zM600 490L738 410 750 430 630 515 660 520 650 545 780 463 792 482 690 570 700 610 778 565 782 580 720 630 755 640 820 600 890 660 800 735zM1060 1075L1095 1060 1070 1095 1080 1130zM1130 1150L1270 1113 1282 1150 1155 1185 1160 1230 1275 1207 1280 1240 1140 1270 1130 1300zM1125 1308L1322 1295 1328 1427 1120 1443z"/>
                </g>
                <path d="M900 880L1045 1020 1040 1050 1000 1010 930 930z" fill="#c8dea6"/>
                <g fill="none" stroke="#fff" stroke-width="9">
                  <path d="M0 500L45 740 100 1100 130 1290 150 1310M0 555L140 670 225 1180M285 435L380 990M425 840L440 950M0 975L435 910M0 1055L400 993M240 440L500 400M0 1270L150 1250M780 845L600 1010M775 845L700 770M270 1175L555 1440 700 1568M600 1110L880 1350M970 1040L540 1450 420 1568M1065 1140L640 1540M360 1250L80 1520M1085 1500L1010 1568"/>
                  <path d="M130 1290L320 1460M0 1430L100 1530M720 1330L800 1400" stroke-width="17"/>
                </g>
                <g fill="none"><path d="M705 1215Q560 1350 610 1400 680 1480 760 1475L850 1465M850 1350Q900 1420 870 1480L780 1530M790 1400Q820 1460 870 1470 900 1500 820 1568" stroke="#ffdc8f" stroke-width="11"/></g>
                <g fill="none"><path d="M0 1410L240 1180 400 1010 680 750" stroke="#c2c3c4" stroke-width="18"/><path d="M0 1410L240 1180 400 1010 680 750" stroke="#f5f5f5" stroke-width="5"/><path d="M0 900L280 862 600 815" stroke="#b9babb" stroke-width="7"/></g>
                <g fill="none"><path d="M222 0L430 280 700 660 860 830Q905 870 910 920 930 1000 970 1040 1080 1140 1100 1180 1115 1250 1095 1568" stroke="#fff" stroke-width="26"/><path d="M222 0L430 280 700 660 860 830Q905 870 910 920 930 1000 970 1040 1080 1140 1100 1180 1115 1250 1095 1568" stroke="#c2c2c1" stroke-width="9"/></g>
                <path d="M1560 690L1120 1180 960 1365Q900 1430 850 1460 780 1500 690 1580" fill="none" stroke="#e08b17" stroke-width="32"/><path d="M1560 690L1120 1180 960 1365Q900 1430 850 1460 780 1500 690 1580" fill="none" stroke="#fb9d27" stroke-width="26"/>
              </g>

              <!-- Labels -->
              <g font-size="26" fill="#4a4741" stroke="#f3f1ec" stroke-width="5" stroke-linejoin="round" paint-order="stroke">
                <g fill="#3d3b38"><text x="278" y="77" text-anchor="end">Lombard Street</text><text x="639" y="69" text-anchor="end">Coit Tower</text><text x="674" y="124">Exploratorium</text><text x="752" y="690">Moscone Center</text></g>
                <g fill="#ab9e7b" font-style="italic" font-weight="500" font-size="28"><text x="183" y="115">RUSSIAN HILL</text><text x="165" y="521">POLK GULCH</text><text x="336" y="697">TENDERLOIN</text><text x="9" y="720">LAGUNA</text><text x="787" y="180">EMBARCADERO</text><text x="751" y="333">FINANCIAL</text><text x="761" y="360">DISTRICT</text></g>
                <g fill="#5d5a54"><text transform="translate(-4 329) rotate(-9)">oadway</text><text transform="translate(656 226) rotate(-9)">Broadway</text><text transform="translate(534 438) rotate(-8)">California St</text><text transform="translate(492 479) rotate(-7)">Pine St</text><text transform="translate(486 515) rotate(-7)">Bush St</text><text transform="translate(255 654) rotate(-8)">Geary Blvd</text><text transform="translate(448 656) rotate(-8)">O'Farrell St</text><text transform="translate(317 392) rotate(80)">Hyde St</text><text transform="translate(377 476) rotate(80)">Leavenworth St</text><text transform="translate(679 344) rotate(80)">Kearny St</text><text transform="translate(113 278) rotate(79)">klin St</text><text transform="translate(500 112) rotate(40)">Columbus Ave</text><text transform="translate(846 473) rotate(-46)">Market St</text><text transform="translate(862 550) rotate(-46)">Mission St</text><text transform="translate(942 643) rotate(-45)">Folsom St</text><text transform="translate(936 562) rotate(48)">St</text></g>
                <g fill="#33312e" font-size="25"><text transform="translate(438 326) rotate(-7)">Jackson St</text><text transform="translate(471 384) rotate(-6)">Clay St</text><text transform="translate(-6 362) rotate(-6)">c Ave</text><text transform="translate(-2 393) rotate(-6)">on St</text><text transform="translate(-2 490) rotate(-8)">mento St</text></g>
                <text x="434" y="579" fill="#38761d" font-style="italic">Union Square</text>
                <g fill="#33396b"><text x="969" y="345">Ferry Building</text><text x="969" y="371">Marketplace</text><text x="602" y="712">Metreon</text></g>
                <g fill="#3e3e44" stroke="#d6e5fb"><text x="1229" y="201">San Francisco</text><text x="1190" y="227">Oakland Bay Bridge</text></g>
              </g>

              <!-- Place symbols -->
              <g fill="#fff"><circle cx="299" cy="69" r="15"/><circle cx="660" cy="59" r="15"/><circle cx="860" cy="114" r="15"/><circle cx="447" cy="424" r="15"/><circle cx="1005" cy="302" r="15"/><circle cx="721" cy="705" r="15"/><circle cx="-2" cy="672" r="14"/></g>
              <g fill="#8d6e63"><path d="M295 64h4l2-3h5l2 3h4v14h-17zM289 63h2v-3h2v3h3v2h-3v3h-2v-3h-2z"/><circle cx="303" cy="71" r="3.500" fill="#fff"/><path d="M652 51h3v3h3v-3h4v3h3v-3h3v7h-3v6l3 4v2h-16v-2l3-4v-6h-3z"/><path d="M849 110l11-7 11 7v2h-22zM851 113h3v9h-3zM866 113h3v9h-3zM849 122h22v3h-22zM856 113h2v2h4v-2h2v7h-2v-3h-4v3h-2z"/><path d="M437 432v-7q2-4 5 0v7zM444 432v-13q3-6 6 0v13zM453 432v-7q2-4 5 0v7z"/></g>
              <path d="M996 296h4l2 3h12l-2 9h-9l-4-10h-3z" fill="#5f6fc7"/><circle cx="1003" cy="311" r="2" fill="#5f6fc7"/><circle cx="1011" cy="311" r="2" fill="#5f6fc7"/><path d="M714 702h14v10h-14z" fill="#5f6fc7"/><path d="M717 702v-3q4-6 8 0v3" fill="none" stroke="#5f6fc7" stroke-width="2"/>
              <rect x="1040" y="270" width="26" height="26" rx="2" fill="#0aa4f2"/><path d="M1047 273h12q2 0 2 2v13h-16v-13q0-2 2-2zM1047 289l-3 4h3l3-4zM1059 289l3 4h-3l-3-4z" fill="#fff"/><path d="M1048 277h10v5h-10z" fill="#0aa4f2"/><circle cx="1049" cy="285" r="1" fill="#0aa4f2"/><circle cx="1057" cy="285" r="1" fill="#0aa4f2"/>
              <g fill="#fff" stroke="#129dde" stroke-width="2"><rect x="931" y="363" width="17" height="17" rx="1"/><rect x="775" y="515" width="17" height="17" rx="1"/><rect x="622" y="667" width="17" height="17" rx="1"/></g>
              <g font-size="11" font-weight="700" fill="#111"><text x="933" y="376">b<tspan fill="#129dde">a</tspan></text><text x="777" y="528">b<tspan fill="#129dde">a</tspan></text><text x="625" y="680">b</text></g>
              <path d="M196 580l4 4q5 1 8-2 5 3 10 3t9-3q4 3 9 2l3-4 4 8q-3 5 0 12 2 8-3 13l-12 2-10 4-10-4-12-2q-5-5-3-13 3-7-1-12z" fill="#fff" stroke="#696969" stroke-width="2"/><text x="217" y="606" text-anchor="middle" font-size="21" font-weight="500" fill="#333">101</text>
              <g font-size="21" fill="#fff" text-anchor="middle"><rect x="1045" y="636" width="35" height="26" fill="#679e3d"/><text x="1062" y="656">2C</text><rect x="1010" y="660" width="33" height="26" fill="#679e3d"/><text x="1027" y="680">2B</text></g>

              <!-- Markers -->
              <g stroke="#222" fill-opacity=".85">
                <g fill="#44c640"><use href="#pin" x="475" y="-3" width="100" height="158"/></g><text x="525" y="69" font-family="Open Sans" font-size="54" fill="#fff" fill-opacity="1" stroke="#fff" text-anchor="middle">V</text>
                <g fill="#3cc433"><use href="#pin" x="521" y="43" width="100" height="158"/></g><text x="571" y="118" font-family="Open Sans" font-size="60" fill="#fff" fill-opacity="1" stroke="#fff" text-anchor="middle">V</text>
                <g fill="#44c640"><use href="#pin" x="584" y="535" width="100" height="158"/><use href="#pin" x="460" y="657" width="100" height="158"/></g>
                <g fill="#1d49b8" stroke="#272265"><use href="#pin" x="852" y="411" width="100" height="158"/></g>
                <g fill="#f5ab52"><use href="#pin" x="167" y="109" width="100" height="158"/><use href="#pin" x="118" y="345" width="100" height="158"/><use href="#pin" x="841" y="491" width="100" height="158"/><use href="#pin" x="775" y="648" width="100" height="158"/></g>
              </g>
              <g fill="#f8f5f0" text-anchor="middle" font-family="Open Sans" font-size="60">
                <g stroke="#f8f5f0"><text x="634" y="615">V</text><text x="510" y="737">V</text></g>
                <g font-size="56" font-weight="600" stroke="#8b8478" stroke-width="2" paint-order="stroke"><text x="217" y="183">GF</text><text x="168" y="419">GF</text><text x="891" y="564">GF</text><text x="825" y="722">GF</text></g>
              </g>
              <g fill="#dfe7f5" text-anchor="middle" font-family="Liberation Sans" font-weight="700" font-size="19"><text x="902" y="450">YOU</text><text x="902" y="472">ARE</text><text x="902" y="493">HERE</text></g>

              <!-- Pan, street view and zoom controls -->
              <rect x="103" y="370" width="6" height="344" fill="#fff" stroke="#aaa"/>
              <circle cx="106" cy="104" r="61" fill="#0003"/><circle cx="106" cy="103" r="60" fill="#fff" stroke="#d0d0d0"/><path d="M93 74l13-11 13 11M93 134l13 11 13-11M75 91L63 105l12 13M136 91l12 14-12 13" fill="none" stroke="#848484" stroke-width="6"/>
              <g fill="#fff" stroke="#b4b4b4" stroke-width="1.500"><rect x="86" y="220" width="39" height="80" rx="3"/><rect x="86" y="331" width="39" height="40" rx="3"/><rect x="87" y="509" width="39" height="18" rx="3"/></g>
              <path d="M96 350h20M106 340v20" stroke="#777" stroke-width="4"/><path d="M97 518h19" stroke="#777" stroke-width="2"/>
              <g fill="#f5b412" stroke="#b67a14" stroke-width="1.500"><path d="M94 249h21q3 0 3 4v18h-5v-9h-2v25h-12v-25h-2v9h-5v-18q0-4 2-4z"/><circle cx="104" cy="238" r="9"/></g><path d="M99 248h11l-5 9z" fill="#d33b22"/>
            </svg>
            <div class="absolute top-[14px] right-[13px] h-[42px] flex rounded-[3px] bg-white shadow-[0_1px_5px_#0007] font-[Roboto,sans-serif] text-[26px]">
              <button class="w-[84px] font-medium text-black border-r-2 border-[#a5bbdd]">Map</button><button class="w-[125px] text-[#565656]">Satellite</button>
            </div>
          </section>

          <!-- Results -->
          <section class="w-[790px] shrink-0 flex justify-between" aria-label="Locations">
            <ul class="flex flex-col gap-[28px] pt-[1px] text-[34px] leading-[44px] whitespace-nowrap overflow-hidden">
              <li><a href="#" class="text-[#4cae4c]">Shizen Vegan Sushi Bar</a><p class="mt-[16px]">370 14th St San Francisco California (94103)</p></li>
              <li><a href="#" class="text-[#4cae4c]">The Flying Falafel</a><p class="mt-[16px]">1051 Market St San Francisco California (94103)</p></li>
              <li><a href="#" class="text-[#4cae4c]">Hella Vegan Eats - Food Truck</a><p class="mt-[16px]">2700 16th St San Francisco California (94110)</p></li>
              <li><a href="#" class="text-[#4cae4c]">Indochine Vegan</a><p class="mt-[16px]">508 Valencia St San Francisco California (94110)</p></li>
              <li><a href="#" class="text-[#4cae4c]">Gracias Madre</a><p class="mt-[16px]">2211 Mission St San Francisco California (94110)</p></li>
              <li><a href="#" class="text-[#4cae4c]">Loving Hut - Westfield Mall Food Emporium</a></li>
            </ul>
            <div class="w-[30px] shrink-0 border-x-2 border-[#e6e6e6] bg-[#fafafa] pt-[2px] pl-[6px]"><div class="w-[16px] h-[60px] rounded-full bg-[#c6c6c6]"></div></div>
          </section>
        </div>
      </div>
      <!-- Page scrollbar -->
      <div class="w-[29px] shrink-0 border-l-2 border-[#dedede] bg-[#f9f9f9] pt-[3px] pl-[6px]"><div class="w-[16px] h-[72%] rounded-full bg-[#c6c6c6]"></div></div>
      <div class="absolute left-0 inset-y-0 w-[64px] bg-linear-to-r from-black/12 to-transparent pointer-events-none"></div>
    </div>
  </main>
</div>
</body>
</html>
